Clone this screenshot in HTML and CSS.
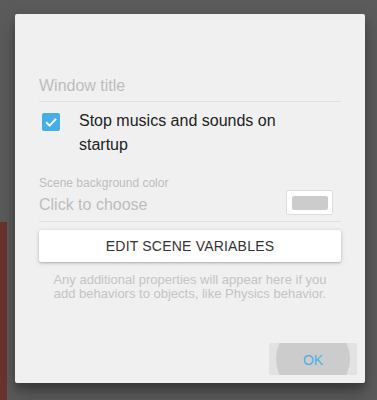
FILE: index.html
```html
<!DOCTYPE html>
<html lang="en">
<head>
  <meta charset="UTF-8">
  <title>Scene properties</title>
  <link rel="stylesheet" href="styles.css">
</head>
<body>
  <div class="backdrop-strip"></div>
  <div class="dialog">
    <div class="dialog-body">
      <div class="text-field">
        <span class="placeholder">Window title</span>
      </div>

      <label class="check-row">
        <span class="checkbox">
          <svg viewBox="0 0 18 18" width="18" height="18">
            <path d="M4.2 9.3 L7.6 12.6 L14 5.8" fill="none" stroke="#fff" stroke-width="2"/>
          </svg>
        </span>
        <span class="check-label">Stop musics and sounds on startup</span>
      </label>

      <div class="color-field">
        <div class="color-text">
          <span class="small-label">Scene background color</span>
          <span class="placeholder">Click to choose</span>
        </div>
        <div class="swatch"><div class="swatch-inner"></div></div>
      </div>

      <button class="raised-btn">EDIT SCENE VARIABLES</button>

      <p class="hint">Any additional properties will appear here if you add behaviors to objects, like Physics behavior.</p>
    </div>

    <div class="dialog-actions">
      <button class="flat-btn"><span class="ripple"></span><span class="flat-label">OK</span></button>
    </div>
  </div>
</body>
</html>
```

FILE: styles.css
```css
body {
  margin: 0;
  height: 400px;
  background: #5b5b5b;
  font-family: "Liberation Sans", Arial, sans-serif;
  overflow: hidden;
  position: relative;
}

.backdrop-strip {
  position: absolute;
  left: 0;
  top: 222px;
  width: 7px;
  height: 178px;
  background: #6a342e;
}

.dialog {
  position: relative;
  margin: 14px 0 0 15px;
  width: 350px;
  height: 369px;
  background: #f0f0f0;
  border-radius: 2px;
  box-shadow: 0 10px 20px rgba(0, 0, 0, 0.25), 0 6px 6px rgba(0, 0, 0, 0.2);
  display: flex;
  flex-direction: column;
}

.dialog-body {
  padding: 60px 24px 0 24px;
  display: flex;
  flex-direction: column;
}

.placeholder {
  font-size: 16px;
  line-height: 24px;
  color: #bdbdbd;
}

.text-field {
  padding-bottom: 3px;
  border-bottom: 1px solid #e0e0e0;
}

.check-row {
  margin-top: 7px;
  display: flex;
  align-items: flex-start;
}

.checkbox {
  width: 18px;
  height: 18px;
  margin: 4px 19px 0 3px;
  flex-shrink: 0;
  background: #44aee6;
  border-radius: 2px;
  display: flex;
}

.check-label {
  width: 225px;
  font-size: 16px;
  line-height: 24px;
  color: #222;
}

.color-field {
  margin-top: 18px;
  padding-bottom: 4px;
  border-bottom: 1px solid #e0e0e0;
  display: flex;
  align-items: flex-end;
  justify-content: space-between;
}

.color-text {
  display: flex;
  flex-direction: column;
  gap: 2px;
}

.small-label {
  font-size: 12px;
  line-height: 16px;
  color: #bdbdbd;
}

.swatch {
  width: 45px;
  height: 23px;
  margin: 0 8px 2px 0;
  background: #fff;
  border: 1px solid #dcdcdc;
  border-radius: 2px;
  display: flex;
  align-items: center;
  justify-content: center;
}

.swatch-inner {
  width: 36px;
  height: 14px;
  background: #cccccc;
  border-radius: 2px;
}

.raised-btn {
  margin-top: 8px;
  height: 32px;
  border: none;
  border-radius: 2px;
  background: #fff;
  box-shadow: 0 1px 5px rgba(0, 0, 0, 0.14), 0 1px 2px rgba(0, 0, 0, 0.18);
  font-family: inherit;
  font-size: 14px;
  color: #333;
  letter-spacing: 0.2px;
}

.hint {
  margin: 11px 0 0 0;
  padding: 0 12px;
  font-size: 13px;
  line-height: 14px;
  text-align: center;
  color: #c4c4c4;
}

.dialog-actions {
  margin-top: auto;
  padding: 8px;
  display: flex;
  justify-content: flex-end;
}

.flat-btn {
  position: relative;
  width: 88px;
  height: 32px;
  border: none;
  border-radius: 2px;
  background: #e2e2e2;
  padding: 0;
  overflow: hidden;
  display: flex;
  align-items: center;
  justify-content: center;
}

.ripple {
  position: absolute;
  left: 7px;
  top: -21px;
  width: 74px;
  height: 74px;
  border-radius: 50%;
  background: #cccccc;
}

.flat-label {
  position: relative;
  font-family: "Liberation Sans", Arial, sans-serif;
  font-size: 14px;
  color: #4ab0e6;
  margin-top: 2px;
}
```
